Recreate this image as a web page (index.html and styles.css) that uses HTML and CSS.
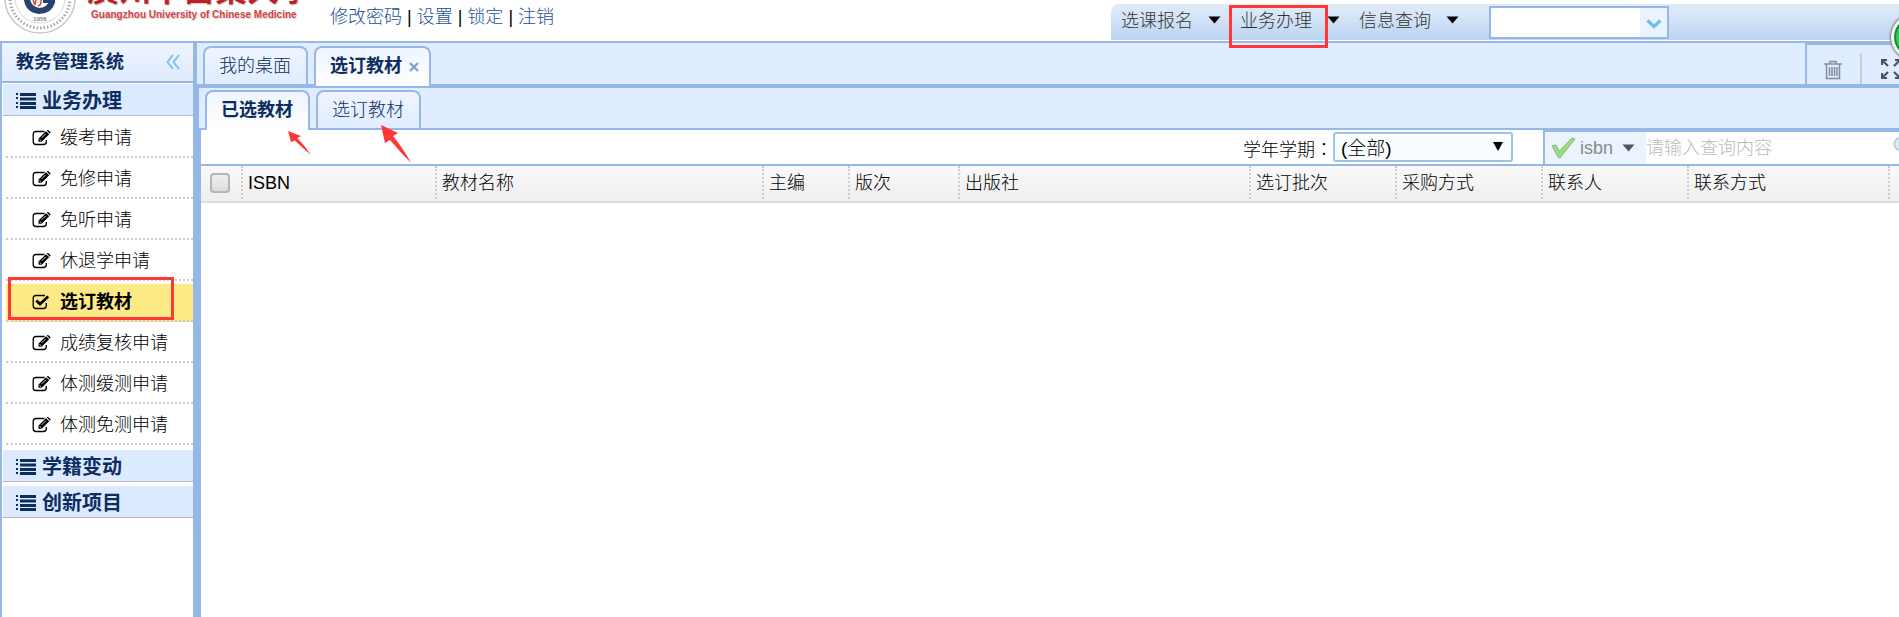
FILE: index.html
```
<!DOCTYPE html>
<html lang="zh-CN">
<head>
    <meta charset="UTF-8">
    <meta name="viewport" content="width=device-width, initial-scale=1.0">
    <title>教务管理系统</title>
    <link rel="stylesheet" href="styles.css">
</head>
<body>
    <svg width="0" height="0" class="symbols" aria-hidden="true">
        <symbol id="icon-list" viewBox="0 0 20 16">
            <path d="M0 0h2v2H0zM4 0h16v3H4zM0 4h2v2H0zM4 4.500h16v3H4zM0 9h2v2H0zM4 9h16v3H4zM0 13h2v2H0zM4 13h16v3H4z"/>
        </symbol>
        <symbol id="icon-edit" viewBox="0 0 19 16">
            <path d="M12.500 1.500H4Q1.200 1.500 1.200 4.300v7.400Q1.200 14.500 4 14.500h7.500q2.800 0 2.800-2.800V10" fill="none" stroke="currentColor" stroke-width="1.300"/>
            <path d="M6.500 11.800V8.500L14 1.200l3.200 3-7.500 7.600zM14.800.500l.7-.4q.5-.2 1 .2l1.800 1.700q.5.5.1 1l-.6.700z"/>
            <path d="M7.500 9.300l1.800 1.700M9.700 7.800l4-4" fill="none" stroke="#fff" stroke-width=".8"/>
        </symbol>
        <symbol id="icon-check" viewBox="0 0 19 16">
            <path d="M13 1.500H4Q1.200 1.500 1.200 4.300v7.400Q1.200 14.500 4 14.500h7.500q2.800 0 2.800-2.800V9" fill="none" stroke="currentColor" stroke-width="1.300"/>
            <path d="M4.300 6.500l3.700 3.600 8.200-7.600" fill="none" stroke="currentColor" stroke-width="2.800"/>
        </symbol>
        <symbol id="icon-caret" viewBox="0 0 13 8">
            <path d="M.5.500h12L6.500 7.500z"/>
        </symbol>
        <symbol id="icon-arrow" viewBox="0 0 30 38" preserveAspectRatio="none">
            <path d="M0 0l17 8-5 3q10 12 18 27Q20 28 9 15l-5 3z" fill="#ff3737"/>
        </symbol>
    </svg>

    <header class="header">
        <div class="logo">
            <svg class="seal" width="80" height="36" viewBox="0 0 80 36">
                <circle cx="40" cy="-2" r="35" fill="#fff" stroke="#c9c9c9" stroke-width="1.500"/>
                <circle cx="40" cy="-2" r="30" fill="none" stroke="#a3a8b0" stroke-width="3" stroke-dasharray="1.500 2"/>
                <circle cx="40" cy="-2" r="25" fill="none" stroke="#d8d8d8"/>
                <path d="M27-8q-2 17 12 19 10 0 13-9" fill="none" stroke="#28426b" stroke-width="6"/>
                <path d="M43-1h12v4H43z" fill="#28426b"/>
                <path d="M33 0l2 5M36-1l-1 6M41-2q1 7-3 8" fill="none" stroke="#d8452a" stroke-width="1.500"/>
                <text x="40" y="21" class="seal-year">1956</text>
            </svg>
            <div class="school">
                <div class="school-cn">廣州中醫藥大學</div>
                <div class="school-en">Guangzhou University of Chinese Medicine</div>
            </div>
        </div>
        <div class="user-links">
            <a href="#">修改密码</a> | <a href="#">设置</a> | <a href="#">锁定</a> | <a href="#">注销</a>
        </div>
        <nav class="top-nav">
            <a class="nav-item" href="#">选课报名 <svg class="caret"><use href="#icon-caret"/></svg></a>
            <a class="nav-item marked" href="#">业务办理 <svg class="caret"><use href="#icon-caret"/></svg></a>
            <a class="nav-item" href="#">信息查询 <svg class="caret"><use href="#icon-caret"/></svg></a>
            <div class="combo">
                <input type="text" aria-label="快速查找">
                <button type="button" aria-label="展开">
                    <svg width="16" height="10" viewBox="0 0 16 10"><path d="M1.500 1.500L8 7.500l6.500-6" fill="none" stroke="#70bdf0" stroke-width="3.200"/></svg>
                </button>
            </div>
        </nav>
        <span class="float-ball"></span>
    </header>

    <div class="layout">
        <aside class="sidebar">
            <div class="sidebar-title">
                <span>教务管理系统</span>
                <button type="button" class="collapse" aria-label="收起">
                    <svg width="14" height="16" viewBox="0 0 14 16"><path d="M7 1L1.500 8 7 15M13 1L7.500 8l5.500 7" fill="none" stroke="#79c1f3" stroke-width="2"/></svg>
                </button>
            </div>
            <a class="group" href="#"><svg><use href="#icon-list"/></svg>业务办理</a>
            <ul class="menu">
                <li><a href="#"><svg><use href="#icon-edit"/></svg>缓考申请</a></li>
                <li><a href="#"><svg><use href="#icon-edit"/></svg>免修申请</a></li>
                <li><a href="#"><svg><use href="#icon-edit"/></svg>免听申请</a></li>
                <li><a href="#"><svg><use href="#icon-edit"/></svg>休退学申请</a></li>
                <li class="active"><a href="#"><svg><use href="#icon-check"/></svg>选订教材</a></li>
                <li><a href="#"><svg><use href="#icon-edit"/></svg>成绩复核申请</a></li>
                <li><a href="#"><svg><use href="#icon-edit"/></svg>体测缓测申请</a></li>
                <li><a href="#"><svg><use href="#icon-edit"/></svg>体测免测申请</a></li>
            </ul>
            <a class="group" href="#"><svg><use href="#icon-list"/></svg>学籍变动</a>
            <a class="group" href="#"><svg><use href="#icon-list"/></svg>创新项目</a>
        </aside>

        <main class="main">
            <div class="tabs">
                <button type="button" class="tab">我的桌面</button>
                <button type="button" class="tab current">选订教材
                    <svg class="close" width="10" height="10" viewBox="0 0 10 10"><path d="M1 1l8 8M9 1L1 9" fill="none" stroke="#7f9fcc" stroke-width="2.200"/></svg>
                </button>
                <div class="tools">
                    <button type="button" aria-label="删除">
                        <svg width="18" height="20" viewBox="0 0 18 20"><path d="M0 4h18M6 3.500V1.500h6v2M2.500 4v14.500h13V4M5.500 7v9M8 7v9M10.500 7v9M13 7v9" fill="none" stroke="#858c9d" stroke-width="1.500"/></svg>
                    </button>
                    <button type="button" class="expand" aria-label="全屏">
                        <svg width="20" height="20" viewBox="0 0 20 20"><path d="M1 6V1h5M1.500 1.500L7 7M14 1h5v5M18.500 1.500L13 7M1 14v5h5M1.500 18.500L7 13M19 14v5h-5M18.500 18.500L13 13" fill="none" stroke="#4c5260" stroke-width="2.200"/></svg>
                    </button>
                </div>
            </div>
            <div class="tabs sub-tabs">
                <button type="button" class="tab current">已选教材<svg class="pointer small"><use href="#icon-arrow"/></svg></button>
                <button type="button" class="tab">选订教材<svg class="pointer"><use href="#icon-arrow"/></svg></button>
            </div>

            <div class="content">
                <form class="toolbar">
                    <label for="term">学年学期<span class="colon" lang="zh-TW">：</span></label>
                    <div class="select-box">
                        <select id="term">
                            <option>(全部)</option>
                        </select>
                    </div>
                    <div class="search">
                        <button type="button" class="search-field">
                            <svg width="24" height="22" viewBox="0 0 24 22"><path d="M1 9l4-1 3 6L21 1l3 1L9 21 7 20z" fill="#9bdc7c" stroke="#86b986"/></svg>
                            isbn
                            <svg class="caret"><use href="#icon-caret"/></svg>
                        </button>
                        <input type="text" placeholder="请输入查询内容" aria-label="请输入查询内容">
                        <svg class="lens" width="16" height="16" viewBox="0 0 16 16"><circle cx="8" cy="8" r="6.500" fill="#dcebfb" stroke="#b7cfe8" stroke-width="2"/></svg>
                    </div>
                </form>
                <table class="grid">
                    <colgroup>
                        <col class="w-check">
                        <col class="w-isbn">
                        <col class="w-title">
                        <col class="w-editor">
                        <col class="w-edition">
                        <col class="w-press">
                        <col class="w-mid">
                        <col class="w-mid">
                        <col class="w-mid">
                        <col class="w-phone">
                        <col>
                    </colgroup>
                    <thead>
                        <tr>
                            <th><input type="checkbox" aria-label="全选"></th>
                            <th>ISBN</th>
                            <th>教材名称</th>
                            <th>主编</th>
                            <th>版次</th>
                            <th>出版社</th>
                            <th>选订批次</th>
                            <th>采购方式</th>
                            <th>联系人</th>
                            <th>联系方式</th>
                            <th></th>
                        </tr>
                    </thead>
                </table>
            </div>
        </main>
    </div>
</body>
</html>
```
FILE: styles.css
```
*, *::before, *::after {
    box-sizing: border-box;
}

body {
    margin: 0;
    height: 100vh;
    display: flex;
    flex-direction: column;
    overflow: hidden;
    background: #fff;
    color: #000;
    font: 300 18px/24px "Liberation Sans", "Noto Sans CJK SC", sans-serif;
}

a {
    color: inherit;
    text-decoration: none;
}

button, input, select {
    font: inherit;
    color: inherit;
    margin: 0;
    padding: 0;
    border: none;
    background: none;
}

.symbols {
    position: absolute;
}

.caret {
    width: 13px;
    height: 8px;
}

/* Header */
.header {
    position: relative;
    display: flex;
    flex: none;
    height: 41px;
}

.logo {
    display: flex;
    width: 330px;
    height: 36px;
    overflow: hidden;
}

.seal {
    flex: none;
}

.seal-year {
    font: bold 6px "Liberation Sans", sans-serif;
    text-anchor: middle;
    fill: #888;
}

.school {
    padding-left: 7px;
    margin-top: -28px;
    color: #c01f24;
    white-space: nowrap;
    text-shadow: 1px 1px 1px #ccc;
}

.school-cn {
    font-size: 32px;
    font-weight: bold;
    line-height: 36px;
}

.school-en {
    padding-left: 4px;
    color: #d2444a;
    font-size: 10px;
    font-weight: bold;
    line-height: 14px;
}

.user-links {
    padding-top: 5px;
    white-space: nowrap;
}

.user-links a {
    color: #1c4f8f;
}

.top-nav {
    display: flex;
    width: 788px;
    height: 36px;
    margin: 4px 0 0 auto;
    padding-left: 10px;
    border-top-left-radius: 8px;
    background: linear-gradient(#e0ebf5, #d7e6f8 30%, #bed5f1 90%);
    color: #333;
}

.nav-item {
    position: relative;
    display: flex;
    gap: 15px;
    width: 119px;
    padding-top: 5px;
    white-space: nowrap;
}

.nav-item .caret {
    margin-top: 7px;
    fill: #000;
}

.nav-item.marked::after {
    content: "";
    position: absolute;
    left: -11px;
    top: 1px;
    width: 99px;
    height: 43px;
    border: 3px solid #ff3737;
    z-index: 2;
}

.combo {
    display: flex;
    width: 180px;
    height: 33px;
    margin: 2px 0 0 11px;
    border: 2px solid #95b8e7;
    background: #fff;
}

.combo input {
    flex: 1;
    min-width: 0;
}

.combo button {
    width: 27px;
    background: #ebf3ff;
}

.float-ball {
    position: absolute;
    right: -38px;
    top: 14px;
    width: 46px;
    height: 46px;
    border: 3px solid #f4f4f4;
    border-radius: 50%;
    background: #35c655;
    box-shadow: 0 0 2px 1px #777, inset 0 0 0 2px #13893a;
    z-index: 2;
}

/* Sidebar */
.layout {
    display: flex;
    flex: 1;
    min-height: 0;
    border-top: 2px solid #95b8e7;
}

.sidebar {
    flex: none;
    width: 197px;
    border: solid #95b8e7;
    border-width: 0 4px 0 2px;
}

.sidebar-title {
    display: flex;
    align-items: center;
    justify-content: space-between;
    height: 40px;
    padding: 0 13px 0 14px;
    border-bottom: 2px solid #95b8e7;
    background: linear-gradient(#eff5ff, #dfebff);
    color: #0e2d5f;
    font-weight: bold;
}

.collapse {
    display: flex;
}

.group {
    display: flex;
    align-items: center;
    gap: 6px;
    height: 33px;
    margin: 0 0 3px 1px;
    padding: 2px 0 0 13px;
    border-top: 1px solid #fff;
    border-bottom: 1px solid #b4b9c2;
    background: #dceaff;
    color: #0e2d5f;
    font-size: 20px;
    font-weight: bold;
}

.group svg {
    width: 20px;
    height: 16px;
    fill: currentColor;
}

.menu {
    list-style: none;
    margin: 4px 0 4px 4px;
    padding: 0;
}

.menu li {
    position: relative;
    height: 38px;
    margin-top: 3px;
    border-bottom: 2px dotted #ccc;
}

.menu a {
    display: flex;
    align-items: center;
    gap: 9px;
    height: 36px;
    padding-left: 26px;
}

.menu svg {
    width: 19px;
    height: 16px;
    fill: currentColor;
}

.menu .active {
    background: #fcea86;
    font-weight: bold;
}

.menu .active::after {
    content: "";
    position: absolute;
    left: 2px;
    top: -7px;
    width: 166px;
    height: 43px;
    border: 3px solid #ff3737;
}

/* Tabs */
.main {
    display: flex;
    flex: 1;
    flex-direction: column;
    min-width: 0;
}

.tabs {
    display: flex;
    align-items: flex-end;
    gap: 6px;
    height: 45px;
    padding-left: 6px;
    border-bottom: 4px solid #95b8e7;
    background: #e0ecff;
    color: #0e2d5f;
}

.tab {
    position: relative;
    display: flex;
    align-items: center;
    height: 38px;
    padding: 0 15px 0 14px;
    border: 2px solid #95b8e7;
    border-bottom: none;
    border-radius: 8px 8px 0 0;
    background: linear-gradient(#eff5ff, #e0ecff);
    white-space: nowrap;
}

.tab.current {
    height: 40px;
    margin-bottom: -2px;
    padding-bottom: 2px;
    background: linear-gradient(#eff5ff, #fff);
    font-weight: bold;
}

.close {
    margin: 2px -5px 0 7px;
}

.tools {
    display: flex;
    align-self: stretch;
    width: 94px;
    margin-left: auto;
    overflow: hidden;
    border: solid #95b8e7;
    border-width: 2px 0 0 2px;
}

.tools button {
    flex: none;
    width: 53px;
    padding: 15px 0 0 17px;
    text-align: left;
}

.tools .expand {
    margin-top: 8px;
    padding: 6px 0 0 19px;
    border-left: 2px solid #ccc;
}

.sub-tabs {
    height: 42px;
    border-bottom-width: 2px;
    border-left: 2px solid #95b8e7;
}

.pointer {
    position: absolute;
    left: 63px;
    bottom: -35px;
    width: 30px;
    height: 38px;
    z-index: 2;
}

.pointer.small {
    left: 81px;
    bottom: -25px;
    width: 23px;
    height: 24px;
}

/* Filter bar and grid */
.content {
    display: flex;
    flex: 1;
    flex-direction: column;
    border-left: 4px solid #95b8e7;
}

.toolbar {
    display: flex;
    flex: none;
    justify-content: flex-end;
    height: 36px;
    border-bottom: 2px solid #95b8e7;
}

.toolbar label {
    padding-top: 6px;
}

.colon {
    font-family: "Noto Sans CJK TC", sans-serif;
}

.select-box {
    position: relative;
    width: 180px;
    height: 30px;
    margin: 2px 30px 0 0;
}

.select-box::after {
    content: "";
    position: absolute;
    right: 10px;
    top: 10px;
    border: solid transparent;
    border-width: 9px 5px 0;
    border-top-color: #000;
}

.select-box select {
    appearance: none;
    width: 100%;
    height: 100%;
    padding: 3px 0 0 6px;
    border: 2px solid #9fc3e0;
    border-radius: 3px;
    background: #f9fdff;
    font-size: 19px;
}

.search {
    display: flex;
    width: 356px;
    overflow: hidden;
    border: solid #95b8e7;
    border-width: 2px 0 0 2px;
}

.search-field {
    display: flex;
    flex: none;
    align-items: center;
    width: 101px;
    padding-left: 6px;
    gap: 5px;
    background: #ebf3ff;
    color: #888;
}

.search-field .caret {
    margin-left: 4px;
    fill: #555;
}

.search input {
    flex: 1;
    min-width: 0;
}

.search input::placeholder {
    color: #bbb;
}

.lens {
    flex: none;
    margin: 4px -10px 0 0;
}

.grid {
    width: 100%;
    table-layout: fixed;
    border-collapse: separate;
    border-spacing: 0;
}

.grid th {
    height: 37px;
    padding: 0 0 2px 5px;
    border-right: 2px dotted #ccc;
    border-bottom: 2px solid #ddd;
    background: linear-gradient(#f9f9f9, #efefef);
    font-weight: 300;
    text-align: left;
    white-space: nowrap;
}

.grid th:first-child {
    padding-left: 9px;
}

.grid th:last-child {
    border-right: none;
}

.grid input {
    appearance: none;
    display: block;
    width: 20px;
    height: 20px;
    border: 2px solid #b5b5b5;
    border-radius: 4px;
    background: linear-gradient(#eee, #ddd);
}

.w-check { width: 42px; }
.w-isbn { width: 194px; }
.w-title { width: 327px; }
.w-editor { width: 86px; }
.w-edition { width: 110px; }
.w-press { width: 291px; }
.w-mid { width: 146px; }
.w-phone { width: 201px; }
```
